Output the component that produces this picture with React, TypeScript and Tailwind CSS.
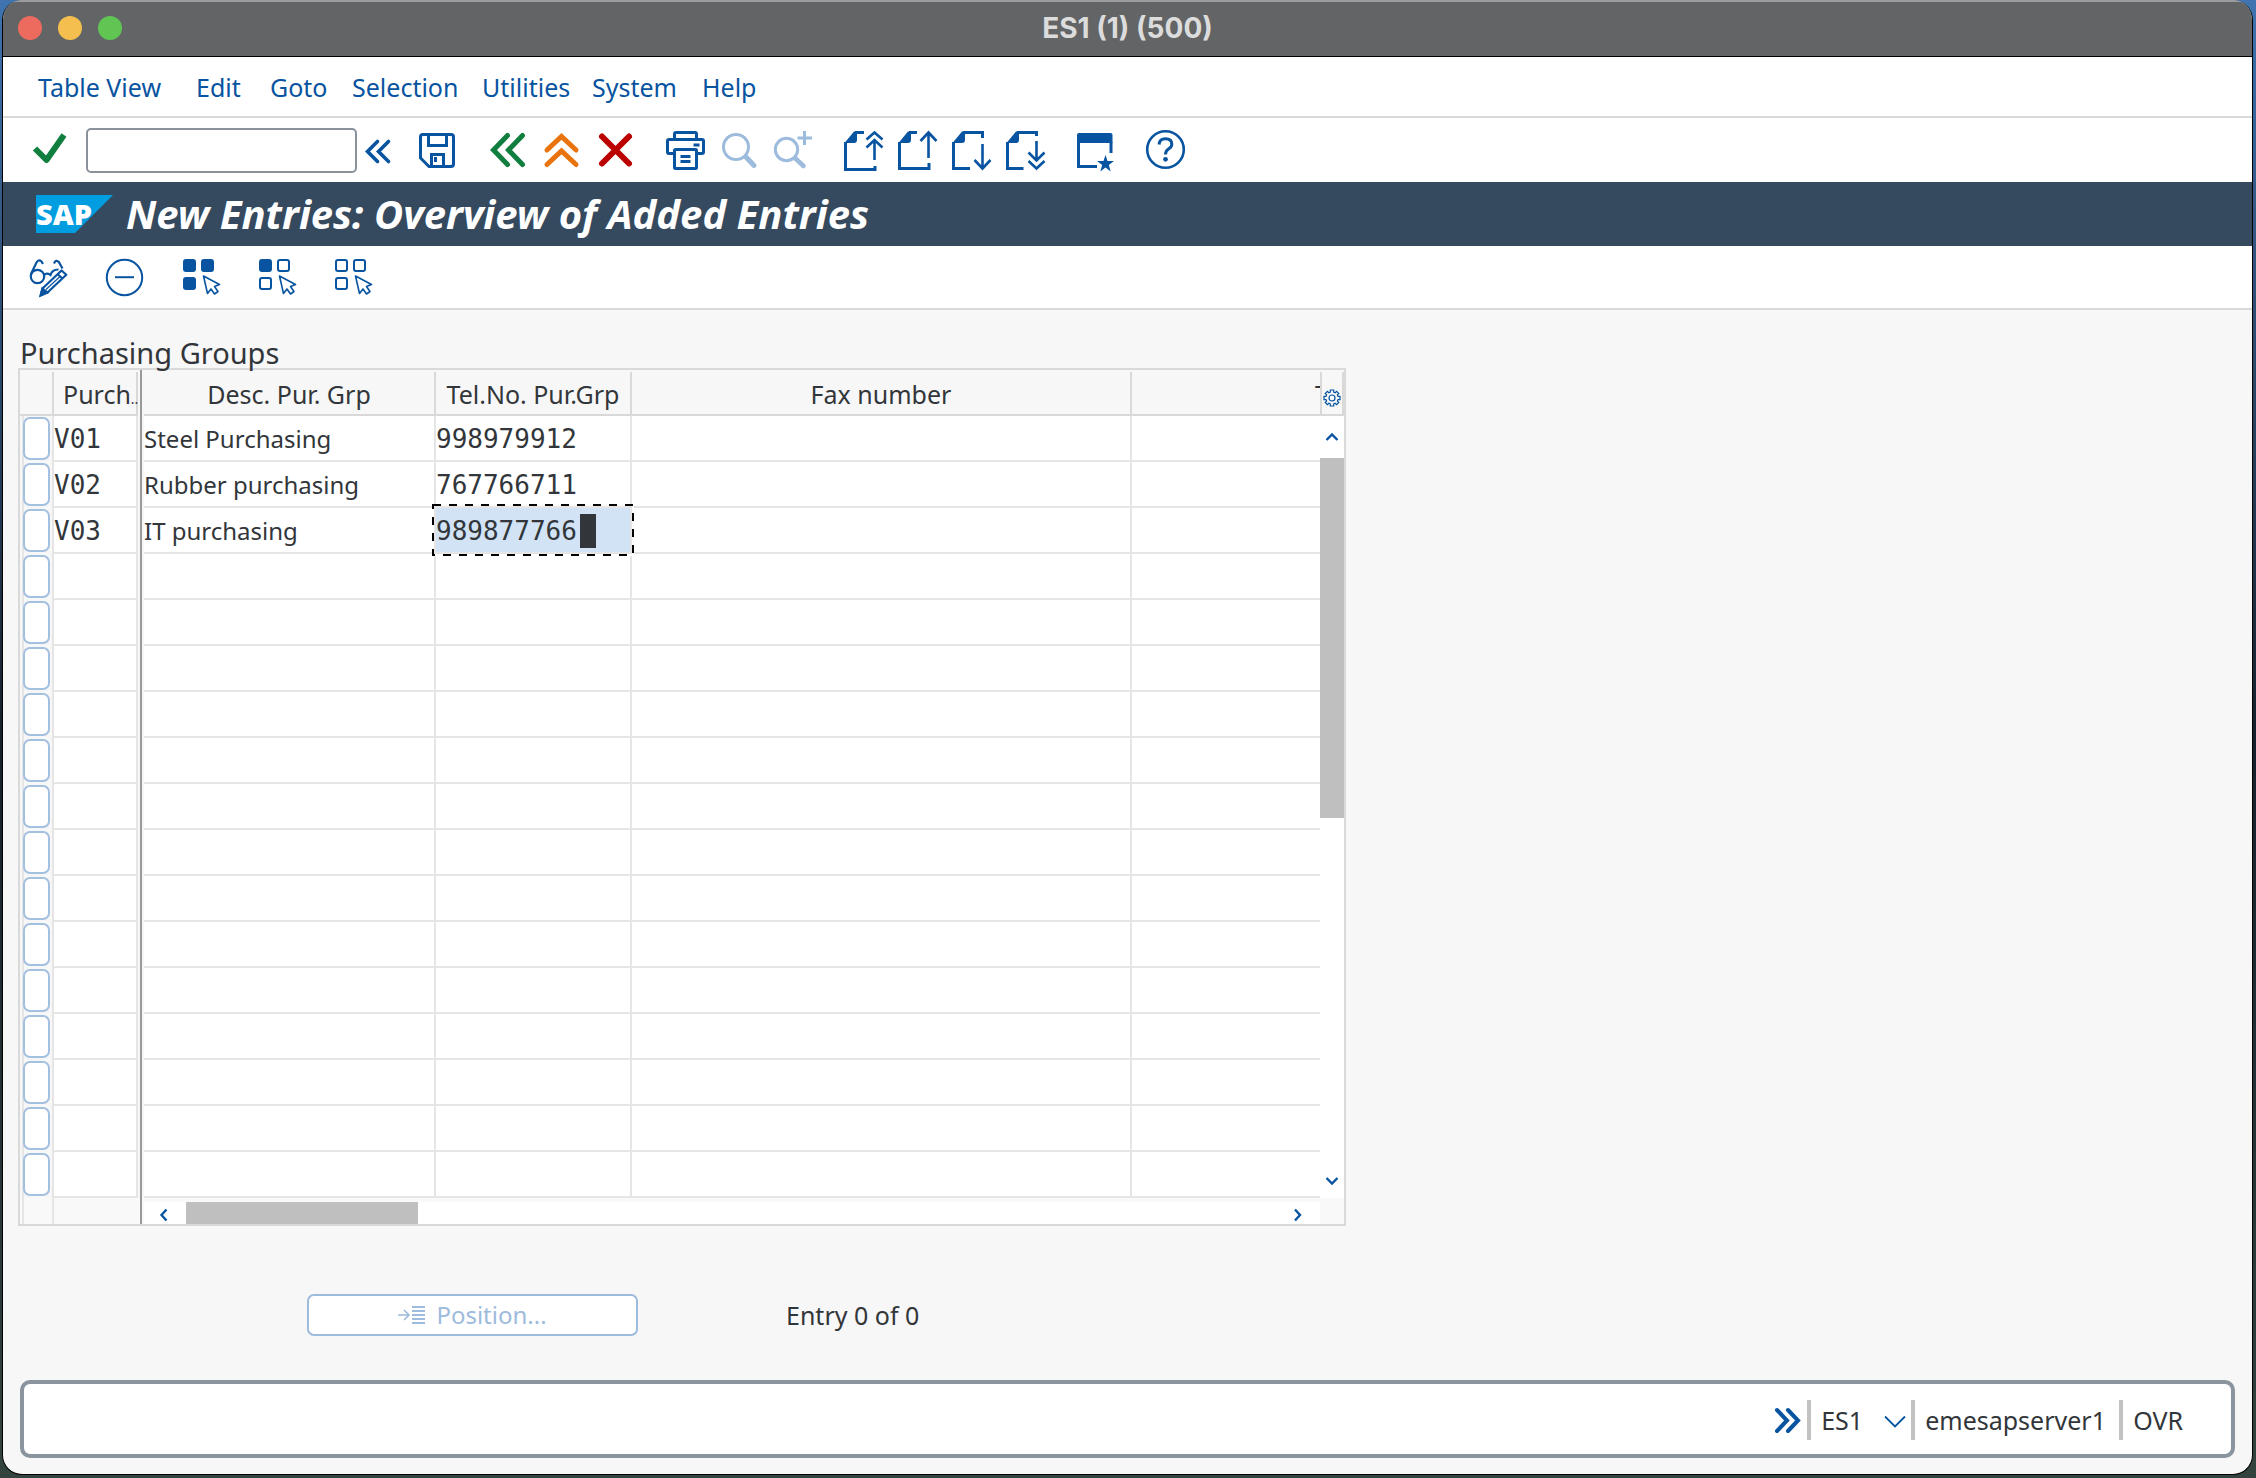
import type { ReactNode } from "react";

const BLUE = "#0854a0";
const PALE = "#9dbbdc";

function Glyph({ children, color = BLUE, width = 3 }: { children: ReactNode; color?: string; width?: number }) {
  return (
    <svg viewBox="0 0 40 40" className="size-10 overflow-visible" fill="none" stroke={color} strokeWidth={width} aria-hidden="true">
      {children}
    </svg>
  );
}

function IconButton({ label, disabled, children }: { label: string; disabled?: boolean; children: ReactNode }) {
  return (
    <button type="button" aria-label={label} disabled={disabled} className="size-10 shrink-0">
      {children}
    </button>
  );
}

function DocCorner({ top }: { top: number }) {
  return (
    <>
      <path d="M1.5 13 L11 1.5 H14 V10 Q14 13 11 13 Z" fill={BLUE} stroke="none" />
      <path d={`M12 2.5 H${top}`} />
    </>
  );
}

const CURSOR = "M22.5 19 L38.5 27.5 L33.5 29.5 L37 34.5 L33.5 37 L30 32 L26.5 36.5 Z";

function Tiles({ filled }: { filled: number }) {
  const spots = [
    [3, 3],
    [21, 3],
    [3, 21],
  ];
  return (
    <Glyph width={2}>
      {spots.map(([x, y], i) => (
        <rect key={i} x={x} y={y} width="11" height="11" rx="2" fill={i < filled ? BLUE : "none"} />
      ))}
      <path d={CURSOR} strokeWidth="1.6" strokeLinejoin="round" />
    </Glyph>
  );
}

const MENU = ["Table View", "Edit", "Goto", "Selection", "Utilities", "System", "Help"];

const RECORDS = [
  { group: "V01", desc: "Steel Purchasing", tel: "998979912" },
  { group: "V02", desc: "Rubber purchasing", tel: "767766711" },
  { group: "V03", desc: "IT purchasing", tel: "989877766" },
];

const ROWS = Array.from({ length: 17 }, (_, i) => RECORDS[i] ?? { group: "", desc: "", tel: "" });
const ACTIVE_ROW = 2;

const CELL = "h-[46px] border-b-2 border-[#e5e5e5] bg-white p-0";
const FIELD = "block h-11 w-full bg-transparent outline-none";
const MONO = "font-['DejaVu_Sans_Mono',monospace] text-[26px] pt-0.5";

function TitleBar() {
  return (
    <header className="relative flex h-[57px] shrink-0 items-center justify-center border-t-2 border-b border-t-[#9b9da0] border-b-black bg-[#626466] pb-[3px]">
      <div className="absolute left-[15px] flex gap-4">
        <button type="button" aria-label="Close" className="size-6 rounded-full bg-[#ed6a5e]" />
        <button type="button" aria-label="Minimize" className="size-6 rounded-full bg-[#f5bf4f]" />
        <button type="button" aria-label="Zoom" className="size-6 rounded-full bg-[#61c554]" />
      </div>
      <h1 className="font-['Inter',sans-serif] text-[28px] leading-8 font-bold text-[#dcdcdc]">ES1 (1) (500)</h1>
    </header>
  );
}

function StandardToolbar() {
  return (
    <div className="flex h-16 shrink-0 items-center bg-white pl-[27px]">
      <IconButton label="Enter">
        <Glyph color="#107e3e" width={6}>
          <path d="M5 18.5 L16.5 30 L34 5" strokeLinejoin="round" />
        </Glyph>
      </IconButton>
      <input
        aria-label="Command"
        className="ml-4 h-[45px] w-[271px] rounded-[5px] border-2 border-[#89919a] bg-white px-2 outline-none"
      />
      <IconButton label="Close command field">
        <Glyph width={3.6}>
          <path d="M20.5 11.5 L10.5 21.5 L20.5 31.5 M31.5 11.5 L21.5 21.5 L31.5 31.5" strokeLinecap="round" />
        </Glyph>
      </IconButton>
      <div className="ml-5 flex gap-[30px]">
        <IconButton label="Save">
          <Glyph>
            <path d="M6 4.5 H34 Q36.5 4.5 36.5 7 V34 Q36.5 36.5 34 36.5 H12 L3.5 28 V7 Q3.5 4.5 6 4.5 Z" />
            <path d="M11.5 5 V15.5 H29.5 V5 M14.5 36 V24.5 H26.5 V36" />
            <rect x="17" y="27" width="3" height="5" fill={BLUE} stroke="none" />
          </Glyph>
        </IconButton>
        <div className="flex gap-[14px]">
          <IconButton label="Back">
            <Glyph color="#107e3e" width={5}>
              <path d="M35.5 5.5 L21.5 20 L35.5 34.5 M20.5 5.5 L6.5 20 L20.5 34.5" strokeLinecap="round" />
            </Glyph>
          </IconButton>
          <IconButton label="Exit">
            <Glyph color="#e9730c" width={5}>
              <path d="M6 20 L20.5 6.5 L35 20 M6 34.5 L20.5 21 L35 34.5" strokeLinecap="round" />
            </Glyph>
          </IconButton>
          <IconButton label="Cancel">
            <Glyph color="#bb0000" width={6}>
              <path d="M7 6.5 L34 33.5 M34 6.5 L7 33.5" strokeLinecap="round" />
            </Glyph>
          </IconButton>
        </div>
        <div className="flex gap-[14px]">
          <IconButton label="Print">
            <Glyph>
              <path d="M9.5 9 V4 Q9.5 2.5 11 2.5 H30 Q31.5 2.5 31.5 4 V9" />
              <path d="M9 23.5 H4 Q2.5 23.5 2.5 22 V11 Q2.5 9.5 4 9.5 H37 Q38.5 9.5 38.5 11 V22 Q38.5 23.5 37 23.5 H32" />
              <rect x="9.5" y="19.5" width="22" height="19" rx="1" />
              <path d="M15.5 26.5 H25.5 M15.5 31.5 H25.5 M28.5 15 H34.5" />
            </Glyph>
          </IconButton>
          <IconButton label="Find" disabled>
            <Glyph color={PALE}>
              <circle cx="17" cy="17" r="12.5" />
              <path d="M27 27 L35 35.5" strokeWidth="5" strokeLinecap="round" />
            </Glyph>
          </IconButton>
          <IconButton label="Find next" disabled>
            <Glyph color={PALE}>
              <circle cx="13.5" cy="19.5" r="11.2" />
              <path d="M22.5 28.5 L30.5 36" strokeWidth="4.5" strokeLinecap="round" />
              <path d="M31.5 1 V15 M24.5 8 H39" />
            </Glyph>
          </IconButton>
        </div>
        <div className="flex gap-[14px]">
          <IconButton label="First page">
            <Glyph>
              <DocCorner top={21} />
              <path d="M2.5 12 V39.5 H32 V36" />
              <path d="M23.5 9.5 L31.5 2.5 L39.5 9.5 M23.5 17.5 L31.5 10 L39.5 17.5 M31.5 10 V30" strokeWidth="2.6" />
            </Glyph>
          </IconButton>
          <IconButton label="Previous page">
            <Glyph>
              <DocCorner top={20} />
              <path d="M2.5 12 V38.5 H32 V33" />
              <path d="M23.5 11 L31.5 2.5 L39.5 11 M31.5 2.5 V28" strokeWidth="2.6" />
            </Glyph>
          </IconButton>
          <IconButton label="Next page">
            <Glyph>
              <DocCorner top={31} />
              <path d="M31.5 1 V8 M2.5 12 V38.5 H19" />
              <path d="M23.5 30 L31.5 38.5 L39.5 30 M31.5 14 V38" strokeWidth="2.6" />
            </Glyph>
          </IconButton>
          <IconButton label="Last page">
            <Glyph>
              <DocCorner top={31} />
              <path d="M31.5 1 V6 M2.5 12 V38.5 H18.5" />
              <path d="M23.5 22.5 L31.5 30.5 L39.5 22.5 M23.5 31 L31.5 38.5 L39.5 31 M31.5 11 V30" strokeWidth="2.6" />
            </Glyph>
          </IconButton>
        </div>
        <IconButton label="Create favorite">
          <Glyph>
            <path d="M3.5 12 V36.5 H22 M36 12 V23" />
            <path d="M4 3 H35.5 Q37.5 3 37.5 5 V13 H2 V5 Q2 3 4 3 Z" fill={BLUE} stroke="none" />
            <path
              d="M30.5 25 L32.5 31 H39 L33.8 35 L35.7 41.5 L30.5 37.6 L25.3 41.5 L27.2 35 L22 31 H28.5 Z"
              fill={BLUE}
              stroke="none"
            />
          </Glyph>
        </IconButton>
        <IconButton label="Help">
          <Glyph width={2.6}>
            <circle cx="20.5" cy="19.5" r="18.3" />
            <path d="M14 14.5 Q14.5 8.8 20.5 8.8 Q26.8 8.8 26.8 14.2 Q26.8 17 23.5 19 Q20.5 21 20.5 24.5" strokeWidth="3" />
            <circle cx="20.5" cy="29.3" r="2.4" fill={BLUE} stroke="none" />
          </Glyph>
        </IconButton>
      </div>
    </div>
  );
}

function ProgramTitle() {
  return (
    <div className="flex h-16 shrink-0 items-center bg-[#354a5f] pl-[33px]">
      <svg viewBox="0 0 77 38" className="h-[38px] w-[77px]" role="img" aria-label="SAP">
        <path d="M0 0 H77 L39 38 H0 Z" fill="#009de0" />
        <text x="0" y="30" fontFamily="Noto Sans, sans-serif" fontWeight="900" fontSize="29" fill="#fff">
          SAP
        </text>
      </svg>
      <h2 className="ml-[13px] text-[40px] leading-none font-bold whitespace-nowrap text-white italic">
        New Entries: Overview of Added Entries
      </h2>
    </div>
  );
}

function ApplicationToolbar() {
  return (
    <div className="flex h-16 shrink-0 items-center gap-9 border-b-2 border-[#d9d9d9] bg-white pl-[25px]">
      <IconButton label="Display or change">
        <Glyph width={2.2}>
          <circle cx="9.5" cy="19.5" r="6.7" />
          <path d="M3 17 L8.5 5.5 Q10.5 2 13.5 4.5 L15 7" />
          <path d="M16 18 Q18.5 15.5 22.5 18 Q24 12.5 30.5 12.5 M26 6.5 Q28 2 30.8 5 L34.5 11.5" />
          <path d="M14.5 31.5 L33.5 13.5 L38.3 17.8 L19.5 35.5 L12.8 38.3 Z M30 17.5 L34.5 21.5" strokeLinejoin="round" />
          <path d="M18 32.5 L32 19.5" strokeWidth="1.2" />
          <path d="M14.5 31.5 L19.5 35.5 L12.5 38.5 Z" fill={BLUE} />
        </Glyph>
      </IconButton>
      <IconButton label="Delete">
        <Glyph width={2}>
          <circle cx="20.5" cy="20.5" r="17.7" />
          <path d="M11 20.2 H30" />
        </Glyph>
      </IconButton>
      <div className="ml-px flex gap-9">
        <IconButton label="Select all">
          <Tiles filled={3} />
        </IconButton>
        <IconButton label="Select block">
          <Tiles filled={1} />
        </IconButton>
        <IconButton label="Deselect all">
          <Tiles filled={0} />
        </IconButton>
      </div>
    </div>
  );
}

function Arrow({ d, label }: { d: string; label: string }) {
  return (
    <button type="button" aria-label={label} className="flex size-6 shrink-0 items-center justify-center">
      <svg viewBox="0 0 14 14" className="size-[14px]" fill="none" stroke={BLUE} strokeWidth="2.4" aria-hidden="true">
        <path d={d} />
      </svg>
    </button>
  );
}

function EntriesTable() {
  const head = "h-11 border-b-2 border-r-2 border-[#d9d9d9] p-0 pt-0.5 font-normal whitespace-nowrap";
  return (
    <table className="w-[1300px] table-fixed border-separate border-spacing-0 text-left">
      <colgroup>
        <col className="w-[34px]" />
        <col className="w-[84px]" />
        <col className="w-[6px]" />
        <col className="w-[292px]" />
        <col className="w-[196px]" />
        <col className="w-[500px]" />
        <col className="w-[188px]" />
      </colgroup>
      <thead>
        <tr>
          <th className={head} aria-label="Row selection" />
          <th className={head}>
            <div className="flex items-baseline pl-[9px]">
              Purch<span className="text-sm">..</span>
            </div>
          </th>
          <th className="p-0" aria-hidden="true" />
          <th className={`${head} text-center`}>Desc. Pur. Grp</th>
          <th className={`${head} text-center`}>Tel.No. Pur.Grp</th>
          <th className={`${head} text-center`}>Fax number</th>
          <th className="h-11 overflow-hidden border-b-2 border-[#d9d9d9] p-0 pt-0.5 font-normal whitespace-nowrap">
            <div className="w-[188px] overflow-hidden pl-[183px]">T</div>
          </th>
        </tr>
      </thead>
      <tbody className="text-2xl">
        {ROWS.map((row, i) => (
          <tr key={i}>
            <td className="h-[46px] border-r-2 border-[#e5e5e5] p-0">
              <div className="ml-0.5 flex h-[46px] border-l-2 border-[#e5e5e5] pt-px">
                <button
                  type="button"
                  aria-label={`Select row ${i + 1}`}
                  className="-ml-px h-[43px] w-[27px] rounded-[7px] border-2 border-[#a3c0e0] bg-white"
                />
              </div>
            </td>
            <td className={`${CELL} border-r-2`}>
              <input aria-label={`Purchasing group, row ${i + 1}`} defaultValue={row.group} className={`${FIELD} ${MONO}`} />
            </td>
            <td className="p-0" />
            <td className={`${CELL} border-r-2`}>
              <input aria-label={`Description, row ${i + 1}`} defaultValue={row.desc} className={FIELD} />
            </td>
            <td className={i === ACTIVE_ROW ? `${CELL} relative z-10 border-r-2` : `${CELL} border-r-2`}>
              <input
                aria-label={`Telephone, row ${i + 1}`}
                defaultValue={row.tel}
                className={`${FIELD} ${MONO} ${i === ACTIVE_ROW ? "bg-[#d1e3f5]!" : ""}`}
              />
              {i === ACTIVE_ROW && (
                <>
                  <span className="absolute top-[6px] left-[144px] h-[34px] w-4 bg-[#32363a]" />
                  <svg className="pointer-events-none absolute -top-1 -left-1 h-[52px] w-[202px]" fill="none" aria-hidden="true">
                    <rect x="1" y="1" width="200" height="50" stroke="#fff" strokeWidth="2" />
                    <rect x="1" y="1" width="200" height="50" stroke="#000" strokeWidth="2" strokeDasharray="8 8" />
                  </svg>
                </>
              )}
            </td>
            <td className={`${CELL} border-r-2`}>
              <input aria-label={`Fax number, row ${i + 1}`} className={FIELD} />
            </td>
            <td className={CELL}>
              <input aria-label={`Telephone number, row ${i + 1}`} className={FIELD} />
            </td>
          </tr>
        ))}
      </tbody>
    </table>
  );
}

function TableControl() {
  return (
    <div className="w-fit border-2 border-[#d9d9d9]">
      <div className="relative flex pt-0.5">
        <span className="absolute top-0 -bottom-[26px] left-[120px] w-0.5 bg-[#9a9a9a]" />
        <EntriesTable />
        <div className="flex w-6 flex-col bg-white">
          <button
            type="button"
            aria-label="Table settings"
            className="flex h-11 items-center justify-center border-x-2 border-b-2 border-[#d9d9d9] bg-[#f7f7f7] pt-[10px]"
          >
            <svg viewBox="0 0 18 18" className="size-[18px] shrink-0" fill="none" stroke={BLUE} strokeWidth="1.2" aria-hidden="true">
              <path d="M7.3 1 H10.7 V3 L12.2 3.7 L13.6 2.3 L15.8 4.5 L14.4 5.9 L15 7.3 H17 V10.7 H15 L14.4 12.1 L15.8 13.5 L13.6 15.7 L12.2 14.3 L10.7 15 V17 H7.3 V15 L5.8 14.3 L4.4 15.7 L2.2 13.5 L3.6 12.1 L3 10.7 H1 V7.3 H3 L3.6 5.9 L2.2 4.5 L4.4 2.3 L5.8 3.7 L7.3 3 Z" />
              <circle cx="9" cy="9" r="3" />
            </svg>
          </button>
          <div className="flex h-[42px] items-center">
            <Arrow label="Scroll up" d="M1.5 10 L7 4.5 L12.5 10" />
          </div>
          <div className="h-[360px] bg-[#bfbfbf]" />
          <div className="mt-auto mb-[5px]">
            <Arrow label="Scroll down" d="M1.5 4 L7 9.5 L12.5 4" />
          </div>
        </div>
      </div>
      <div className="flex h-[26px] bg-[#f9f9f9]">
        <div className="ml-0.5 w-8 border-x-2 border-[#e5e5e5]" />
        <div className="mt-1 ml-[90px] flex w-[1176px] items-center bg-white pr-[11px] pl-2">
          <div className="pt-1">
            <Arrow label="Scroll left" d="M9.5 1.5 L4.5 7 L9.5 12.5" />
          </div>
          <div className="ml-[10px] h-full w-[232px] bg-[#bfbfbf]" />
          <div className="ml-auto pt-1">
            <Arrow label="Scroll right" d="M5 1.5 L10 7 L5 12.5" />
          </div>
        </div>
      </div>
    </div>
  );
}

function StatusBar() {
  return (
    <footer className="mx-[17px] mt-auto mb-4 flex h-[78px] shrink-0 items-center justify-end rounded-[10px] border-4 border-[#8a949e] bg-white pt-0.5 pr-12">
      <button type="button" aria-label="Show messages" className="mr-[5px]">
        <svg viewBox="0 0 28 28" className="size-7" fill="none" stroke={BLUE} strokeWidth="4" strokeLinecap="round" aria-hidden="true">
          <path d="M3 4 L13 14.5 L3 25 M14 4 L24 14.5 L14 25" />
        </svg>
      </button>
      <div className="flex h-10 w-[104px] items-center border-l-4 border-[#c2c2c2] pl-[10px]">
        ES1
        <button type="button" aria-label="System information" className="mr-1 ml-auto">
          <svg viewBox="0 0 24 24" className="size-6" fill="none" stroke={BLUE} strokeWidth="1.8" aria-hidden="true">
            <path d="M2 8.5 L12 18.5 L22 8.5" />
          </svg>
        </button>
      </div>
      <div className="flex h-10 w-[208px] items-center border-l-4 border-[#c2c2c2] pl-[10px]">emesapserver1</div>
      <div className="flex h-10 items-center border-l-4 border-[#c2c2c2] pl-[10px]">OVR</div>
    </footer>
  );
}

export default function App() {
  return (
    <div className="flex min-h-screen bg-linear-to-b from-[#3f74b0] via-[#16202c] to-[#33443f] pr-[3px] pb-[3px] pl-[2px] font-['Noto_Sans',sans-serif] text-[25px] leading-8 text-[#32363a]">
      <div className="flex grow flex-col overflow-hidden rounded-[20px] border-x border-b border-black bg-[#f7f7f7]">
        <TitleBar />
        <nav className="grid h-[61px] shrink-0 grid-cols-[158px_74px_82px_130px_110px_110px_auto] items-center justify-start justify-items-start border-b-2 border-[#d9d9d9] bg-white pl-[35px] text-[#0854a0]">
          {MENU.map((item) => (
            <button key={item} type="button" className="whitespace-nowrap">
              {item}
            </button>
          ))}
        </nav>
        <StandardToolbar />
        <ProgramTitle />
        <ApplicationToolbar />
        <main className="px-[15px] pt-[27px]">
          <h3 className="pl-0.5 text-[29px] leading-[31px]">Purchasing Groups</h3>
          <TableControl />
          <div className="mt-[68px] flex items-center pl-[289px]">
            <button
              type="button"
              disabled
              className="flex h-[42px] w-[331px] items-center justify-center gap-[10px] rounded-[7px] border-2 border-[#9dbbdc] bg-white text-2xl text-[#9dbbdc]"
            >
              <svg viewBox="0 0 28 20" className="h-5 w-7" fill="none" stroke={PALE} strokeWidth="2" aria-hidden="true">
                <path d="M0 10 H11 M6 5 L11 10 L6 15" strokeWidth="1.6" />
                <path d="M14 2 H27 M14 6 H27 M14 10 H27 M14 14 H27 M14 18 H27" />
              </svg>
              Position...
            </button>
            <span className="ml-[148px]">Entry 0 of 0</span>
          </div>
        </main>
        <StatusBar />
      </div>
    </div>
  );
}
